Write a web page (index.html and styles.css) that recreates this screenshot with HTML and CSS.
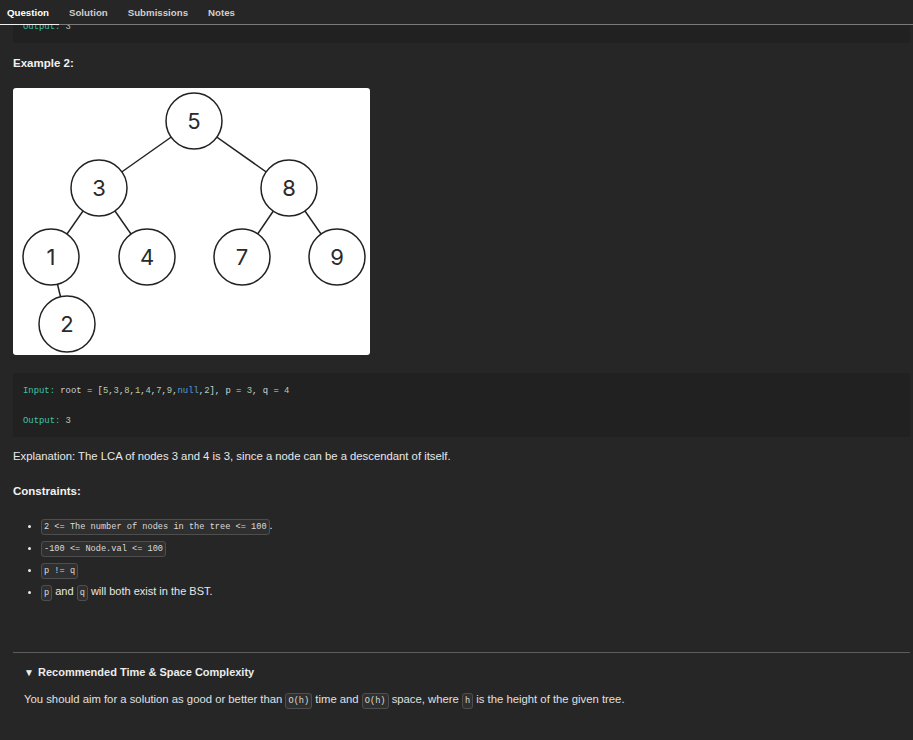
FILE: index.html
```html
<!DOCTYPE html>
<html lang="en">
<head>
<meta charset="utf-8">
<title>Lowest Common Ancestor in BST</title>
<link rel="stylesheet" href="styles.css">
</head>
<body>
<nav class="tabs">
  <a class="tab active">Question</a>
  <a class="tab">Solution</a>
  <a class="tab">Submissions</a>
  <a class="tab">Notes</a>
</nav>
<main class="content">
  <pre class="code code-top"><div class="code-shift"><span class="k">Output:</span> <span class="n">3</span></div></pre>
  <h3 class="heading heading-example">Example 2:</h3>
  <div class="figure">
    <svg width="357" height="267" viewBox="0 0 357 267" xmlns="http://www.w3.org/2000/svg">
      <g stroke="#222" stroke-width="1.5">
        <line x1="181" y1="33" x2="86" y2="100"/>
        <line x1="181" y1="33" x2="276" y2="100"/>
        <line x1="86" y1="100" x2="38" y2="169"/>
        <line x1="86" y1="100" x2="134" y2="169"/>
        <line x1="276" y1="100" x2="229" y2="169"/>
        <line x1="276" y1="100" x2="324" y2="169"/>
        <line x1="38" y1="169" x2="54" y2="236"/>
      </g>
      <g fill="#fff" stroke="#222" stroke-width="1.5">
        <circle cx="181" cy="33" r="28"/>
        <circle cx="86" cy="100" r="28"/>
        <circle cx="276" cy="100" r="28"/>
        <circle cx="38" cy="169" r="28"/>
        <circle cx="134" cy="169" r="28"/>
        <circle cx="229" cy="169" r="28"/>
        <circle cx="324" cy="169" r="28"/>
        <circle cx="54" cy="236" r="28"/>
      </g>
      <g class="node-label" fill="#2a2a2a" text-anchor="middle" dominant-baseline="central">
        <text x="181" y="33">5</text>
        <text x="86" y="100">3</text>
        <text x="276" y="100">8</text>
        <text x="38" y="169">1</text>
        <text x="134" y="169">4</text>
        <text x="229" y="169">7</text>
        <text x="324" y="169">9</text>
        <text x="54" y="236">2</text>
      </g>
    </svg>
  </div>
  <pre class="code code-example"><span class="k">Input:</span> root = [<span class="n">5</span>,<span class="n">3</span>,<span class="n">8</span>,<span class="n">1</span>,<span class="n">4</span>,<span class="n">7</span>,<span class="n">9</span>,<span class="b">null</span>,<span class="n">2</span>], p = <span class="n">3</span>, q = <span class="n">4</span>

<span class="k">Output:</span> <span class="n">3</span></pre>
  <p class="text explanation">Explanation: The LCA of nodes 3 and 4 is 3, since a node can be a descendant of itself.</p>
  <h3 class="heading heading-constraints">Constraints:</h3>
  <ul class="constraints">
    <li><code class="inline">2 &lt;= The number of nodes in the tree &lt;= 100</code>.</li>
    <li><code class="inline">-100 &lt;= Node.val &lt;= 100</code></li>
    <li><code class="inline">p != q</code></li>
    <li><code class="inline">p</code> and <code class="inline">q</code> will both exist in the BST.</li>
  </ul>
  <hr class="rule">
  <details class="hint" open>
    <summary class="hint-title"><span class="caret">▼</span>Recommended Time &amp; Space Complexity</summary>
    <p class="hint-text">You should aim for a solution as good or better than <code class="inline">O(h)</code> time and <code class="inline">O(h)</code> space, where <code class="inline">h</code> is the height of the given tree.</p>
  </details>
</main>
</body>
</html>
```
FILE: styles.css
```css
html, body {
  margin: 0;
  padding: 0;
  background: #262626;
  height: 740px;
  overflow: hidden;
}

body {
  font-family: "Liberation Sans", Arial, sans-serif;
  color: #e8e8e8;
}

.tabs {
  display: flex;
  height: 24px;
  border-bottom: 1px solid #7a7a7a;
  background: #262626;
}

.tab {
  display: flex;
  align-items: center;
  padding: 0 10px;
  font-size: 9.7px;
  font-weight: bold;
  color: #cfcfcf;
  margin-bottom: -1px;
  border-bottom: 1px solid transparent;
}

.tab:first-child {
  padding-left: 7px;
}

.tab.active {
  color: #ffffff;
  border-bottom-color: #f0f0f0;
}

.content {
  padding: 0 3px 0 13px;
}

.code {
  margin: 0;
  background: #212121;
  font-family: "Liberation Mono", "DejaVu Sans Mono", monospace;
  font-size: 8.9px;
  color: #d4d4d4;
  border-radius: 2px;
}

.code-top {
  height: 18px;
  overflow: hidden;
  padding: 0 10px;
  line-height: 12px;
}

.code-shift {
  margin-top: -4px;
}

.code-example {
  margin-top: 18px;
  padding: 10.5px 10px 8.5px;
  line-height: 15px;
}

.k { color: #3fc3a6; }
.n { color: #b5cea8; }
.b { color: #569cd6; }

.heading {
  margin: 0;
  font-size: 11.5px;
  line-height: 14px;
  font-weight: bold;
  color: #f2f2f2;
}

.heading-example {
  margin-top: 13px;
  margin-bottom: 18px;
}

.figure {
  width: 357px;
  height: 267px;
  background: #ffffff;
  border-radius: 3px;
  overflow: hidden;
}

.figure svg {
  display: block;
}

.node-label text {
  font-family: Inter, "Noto Sans", sans-serif;
  font-size: 22px;
  font-weight: 400;
}

.text {
  margin: 0;
  font-size: 11.3px;
  line-height: 14px;
}

.explanation {
  margin-top: 12px;
}

.heading-constraints {
  margin-top: 21px;
}

.constraints {
  margin: 16px 0 0;
  padding-left: 28px;
  font-size: 11px;
  line-height: 22px;
}

.constraints li {
  height: 22px;
}

.inline {
  font-family: "Liberation Mono", "DejaVu Sans Mono", monospace;
  font-size: 8.65px;
  line-height: 10px;
  color: #dcdcdc;
  background: #2f2f2f;
  border: 1px solid #4e4e4e;
  border-radius: 3px;
  padding: 2px 2px;
}

.rule {
  margin: 50px 0 0;
  border: 0;
  border-top: 1px solid #5c5c5c;
  height: 0;
}

.hint {
  padding-left: 11px;
  margin-top: 12px;
}

.hint-title {
  list-style: none;
  font-size: 11px;
  line-height: 14px;
  font-weight: bold;
  color: #ececec;
}

.hint-title::-webkit-details-marker {
  display: none;
}

.caret {
  display: inline-block;
  font-size: 10px;
  width: 14px;
}

.hint-text {
  margin: 12px 0 0;
  font-size: 11.3px;
  line-height: 14px;
  color: #e0e0e0;
}
```
